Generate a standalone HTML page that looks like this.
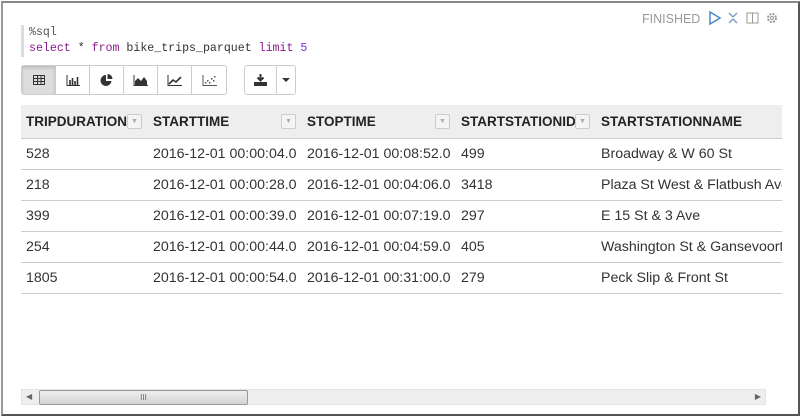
<!DOCTYPE html>
<html><head><style>
*{box-sizing:border-box;margin:0;padding:0}
body{width:802px;height:417px;background:#fff;position:relative;overflow:hidden;font-family:"Liberation Sans",Arial,sans-serif}
.frame{position:absolute;left:1px;top:1px;width:799px;height:415px;border:2px solid #555;border-top-color:#888;border-left-color:#999}
.code{position:absolute;left:21px;top:25px;height:32px;border-left:3px solid #ddd;padding-left:5px;font-family:"Liberation Mono",monospace;font-size:11.6px;line-height:15.5px;color:#333}
.kw{color:#8b1a8b}.num{color:#7b2bd0}.gray{color:#555}
.status{position:absolute;left:642px;top:12px;font-size:12.5px;color:#999}
.tb{position:absolute;top:65px;height:30px;border:1px solid #ccc;border-radius:3px;display:flex;background:#fff}
.tb div{width:34px;height:28px;border-right:1px solid #ccc;display:flex;align-items:center;justify-content:center}
.tb div:last-child{border-right:none}
.tbl{position:absolute;left:21px;top:105px;width:761px;overflow:hidden;height:190px}
table{border-collapse:collapse;width:900px;table-layout:fixed;font-size:14.2px;color:#333}
th{background:#eee;height:33px;text-align:left;font-weight:bold;font-size:13.5px;color:#222;padding-left:5px;position:relative;border-bottom:1px solid #ccc;white-space:nowrap}
td{height:31px;padding-left:5px;border-bottom:1px solid #ccc;white-space:nowrap;overflow:hidden}
.f{position:absolute;top:9px;width:15px;height:15px;border:1px solid #ccc;border-radius:2px;background:#f4f4f4;font-size:7px;color:#aaa;text-align:center;line-height:13px}
.sb{position:absolute;left:21px;top:389px;width:745px;height:16px;background:#eee;border:1px solid #e4e4e4}
.thumb{position:absolute;left:17px;top:0;width:209px;height:15px;background:linear-gradient(#eee,#d4d4d4);border:1px solid #999;border-radius:2px;font-size:8px;text-align:center;color:#666;line-height:13px}
</style></head><body>
<div class="frame"></div>
<div class="code"><span class="gray">%sql</span><br><span class="kw">select</span> * <span class="kw">from</span> bike_trips_parquet <span class="kw">limit</span> <span class="num">5</span></div>
<div class="status">FINISHED</div>
<svg style="position:absolute;left:707px;top:10px" width="80" height="16">
<path d="M3 2 L13 8 L3 14 Z" fill="none" stroke="#4a8bd0" stroke-width="1.5"/>
<g stroke="#7aa0c8" stroke-width="1.5"><path d="M22 3 l4 4 M30 3 l-4 4 M22 13 l4 -4 M30 13 l-4 -4"/></g>
<rect x="40" y="3" width="11" height="10" fill="none" stroke="#999"/><path d="M45.5 3v10" stroke="#999"/>
<circle cx="65" cy="8" r="4" fill="none" stroke="#999" stroke-width="2" stroke-dasharray="2 1.2"/><circle cx="65" cy="8" r="1.5" fill="none" stroke="#999"/>
</svg>
<div class="tb" style="left:21px;width:206px">
<div style="background:#ddd;box-shadow:inset 0 2px 3px #bbb"><svg width="12" height="10"><path d="M0.5 0.5h11v9h-11z M0.5 3.5h11 M0.5 6.5h11 M4.5 .5v9 M8 .5v9" fill="none" stroke="#333"/></svg></div>
<div><svg width="14" height="11"><path d="M1 0v10.5h13" fill="none" stroke="#333"/><path d="M4 5v5M6.5 3v7M9 6v4M11.5 2v8" stroke="#333" stroke-width="1.6"/></svg></div>
<div><svg width="13" height="13"><path d="M6 1A5.5 5.5 0 1 0 11.5 7H6Z" fill="#333"/><path d="M7.5 0A5 5 0 0 1 12.5 5H7.5Z" fill="#333"/></svg></div>
<div><svg width="15" height="11"><path d="M1 0v10.5h14" fill="none" stroke="#333"/><path d="M2 10V6l3-3 3 3 3-4 3 4v4Z" fill="#333"/></svg></div>
<div><svg width="15" height="11"><path d="M1 0v10.5h14" fill="none" stroke="#333"/><path d="M2 9l4-4 3 2 5-5" fill="none" stroke="#333" stroke-width="1.6"/></svg></div>
<div><svg width="15" height="11"><path d="M1 0v10.5h14" fill="none" stroke="#555"/><g fill="#555"><rect x="3" y="7" width="1.5" height="1.5"/><rect x="5" y="5" width="1.5" height="1.5"/><rect x="7" y="7" width="1.5" height="1.5"/><rect x="9" y="3" width="1.5" height="1.5"/><rect x="11" y="5" width="1.5" height="1.5"/><rect x="12" y="1" width="1.5" height="1.5"/></g></svg></div>
</div>
<div class="tb" style="left:244px;width:52px">
<div style="width:33px"><svg width="13" height="12"><path d="M6.5 0v6M3.5 3.5l3 3 3-3" fill="none" stroke="#333" stroke-width="2"/><path d="M0 8h13v4H0z" fill="#333"/></svg></div>
<div style="width:18px"><svg width="8" height="5"><path d="M0 0h8L4 4z" fill="#333"/></svg></div>
</div>
<div class="tbl"><table>
<colgroup><col style="width:127px"><col style="width:154px"><col style="width:154px"><col style="width:140px"><col style="width:325px"></colgroup>
<tr><th>TRIPDURATION<span class="f" style="left:106px">▼</span></th><th>STARTTIME<span class="f" style="left:133px">▼</span></th><th>STOPTIME<span class="f" style="left:133px">▼</span></th><th>STARTSTATIONID<span class="f" style="left:119px">▼</span></th><th>STARTSTATIONNAME</th></tr>
<tr><td>528</td><td>2016-12-01 00:00:04.0</td><td>2016-12-01 00:08:52.0</td><td>499</td><td>Broadway &amp; W 60 St</td></tr>
<tr><td>218</td><td>2016-12-01 00:00:28.0</td><td>2016-12-01 00:04:06.0</td><td>3418</td><td>Plaza St West &amp; Flatbush Ave</td></tr>
<tr><td>399</td><td>2016-12-01 00:00:39.0</td><td>2016-12-01 00:07:19.0</td><td>297</td><td>E 15 St &amp; 3 Ave</td></tr>
<tr><td>254</td><td>2016-12-01 00:00:44.0</td><td>2016-12-01 00:04:59.0</td><td>405</td><td>Washington St &amp; Gansevoort St</td></tr>
<tr><td>1805</td><td>2016-12-01 00:00:54.0</td><td>2016-12-01 00:31:00.0</td><td>279</td><td>Peck Slip &amp; Front St</td></tr>
</table></div>
<div class="sb"><span style="position:absolute;left:4px;top:2px;font-size:8px;color:#666">◀</span><div class="thumb">III</div><span style="position:absolute;right:4px;top:2px;font-size:8px;color:#666">▶</span></div>
</body></html>
